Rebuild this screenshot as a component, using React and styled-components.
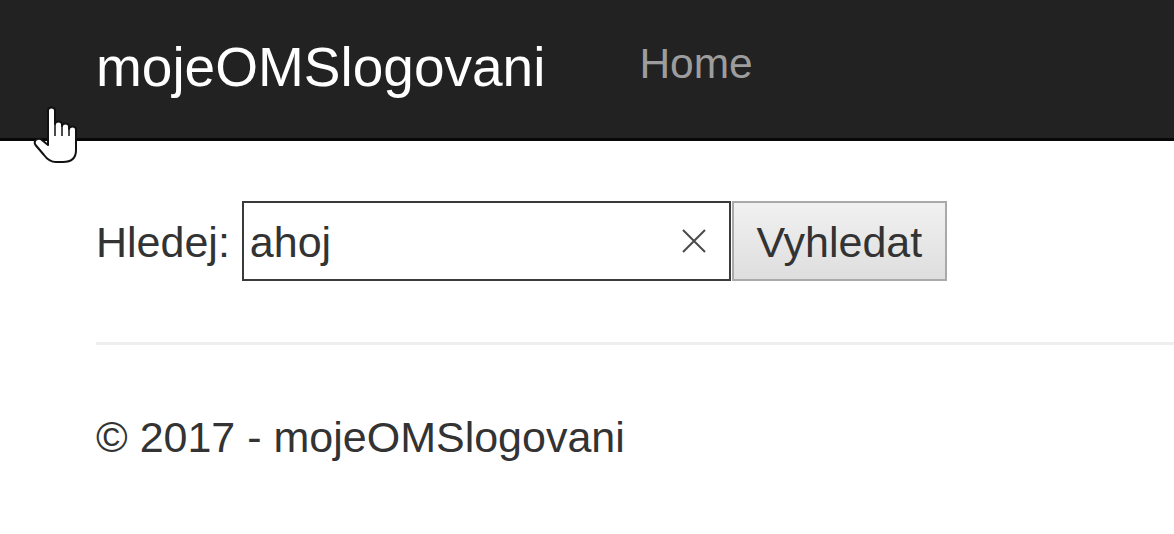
import React from "react";
import styled, { createGlobalStyle } from "styled-components";

const Global = createGlobalStyle`
  html, body { margin: 0; padding: 0; background: #fff; }
  body { font-family: "Liberation Sans", Arial, sans-serif; color: #333; overflow: hidden; }
  * { box-sizing: border-box; }
`;

const Page = styled.div`
  position: relative;
  width: 1174px;
  height: 534px;
  overflow: hidden;
`;

const Navbar = styled.nav`
  display: flex;
  align-items: flex-start;
  height: 141px;
  padding-left: 96px;
  background: #222;
  border-bottom: 3px solid #080808;
`;

const Brand = styled.a`
  font-size: 55px;
  line-height: normal;
  color: #fff;
  text-decoration: none;
  padding-top: 35px;
  margin-right: 94px;
`;

const NavLink = styled.a`
  font-size: 42.5px;
  line-height: normal;
  color: #9d9d9d;
  text-decoration: none;
  padding-top: 40px;
`;

const Main = styled.main`
  padding-left: 96px;
`;

const SearchRow = styled.form`
  display: flex;
  align-items: center;
  margin-top: 60px;
  height: 80px;
`;

const Label = styled.label`
  font-size: 43px;
  line-height: normal;
  margin-right: 12px;
  padding-top: 2px;
`;

const InputBox = styled.div`
  display: flex;
  align-items: center;
  width: 489px;
  height: 80px;
  border: 2px solid #3a3a3a;
  background: #fff;
  padding: 0 22px 0 6px;
`;

const TextInput = styled.input`
  flex: 1;
  min-width: 0;
  border: none;
  outline: none;
  background: transparent;
  font-family: "Liberation Sans", Arial, sans-serif;
  font-size: 43px;
  color: #333;
  padding: 0;
  padding-top: 2px;
`;

const ClearIcon = styled.svg`
  width: 26px;
  height: 26px;
  flex: none;
`;

const Button = styled.button`
  width: 215px;
  height: 80px;
  margin-left: 1px;
  border: 2px solid #a9a9a9;
  background: linear-gradient(#f1f1f1, #dedede);
  font-family: "Liberation Sans", Arial, sans-serif;
  font-size: 43px;
  color: #333;
  padding: 2px 0 0;
`;

const Rule = styled.hr`
  margin: 61px 0 0;
  border: none;
  height: 3px;
  background: #eee;
`;

const Footer = styled.footer`
  margin-top: 68px;
  font-size: 43px;
  line-height: normal;
`;

const Cursor = styled.svg`
  position: absolute;
  left: 32px;
  top: 105px;
  width: 50px;
  height: 60px;
  pointer-events: none;
`;

export default function App() {
  return (
    <>
      <Global />
      <Page>
        <Navbar>
          <Brand href="#">mojeOMSlogovani</Brand>
          <NavLink href="#">Home</NavLink>
        </Navbar>
        <Main>
          <SearchRow onSubmit={(e) => e.preventDefault()}>
            <Label htmlFor="q">Hledej:</Label>
            <InputBox>
              <TextInput id="q" defaultValue="ahoj" />
              <ClearIcon viewBox="0 0 26 26">
                <path d="M2 2 L24 24 M24 2 L2 24" stroke="#4a4a4a" strokeWidth="2" fill="none" />
              </ClearIcon>
            </InputBox>
            <Button type="submit">Vyhledat</Button>
          </SearchRow>
          <Rule />
          <Footer>© 2017 - mojeOMSlogovani</Footer>
        </Main>
        <Cursor viewBox="0 0 50 60">
          <path
            d="M16 31 L16 5.5 Q16 2.5 19.5 2.5 Q23 2.5 23 5.5 L23 19 Q23 16.5 26.5 16.5 Q30 16.5 30 19.5 L30 21 Q30 18.5 33.5 18.5 Q37 18.5 37 21.5 L37 24 Q37 21.5 40.5 21.5 Q44 21.5 44 24.5 L44 45 Q44 57 31 57 L24 57 Q17 57 12 50 L3.5 40 Q1.5 36.5 4.5 34.5 Q7.5 32.5 10.5 35.5 L16 40 Z"
            fill="#fff"
            stroke="#111"
            strokeWidth="2"
            strokeLinejoin="round"
          />
          <path d="M23 19 L23 31 M30 21 L30 31 M37 24 L37 31" stroke="#111" strokeWidth="1.5" fill="none" />
        </Cursor>
      </Page>
    </>
  );
}
